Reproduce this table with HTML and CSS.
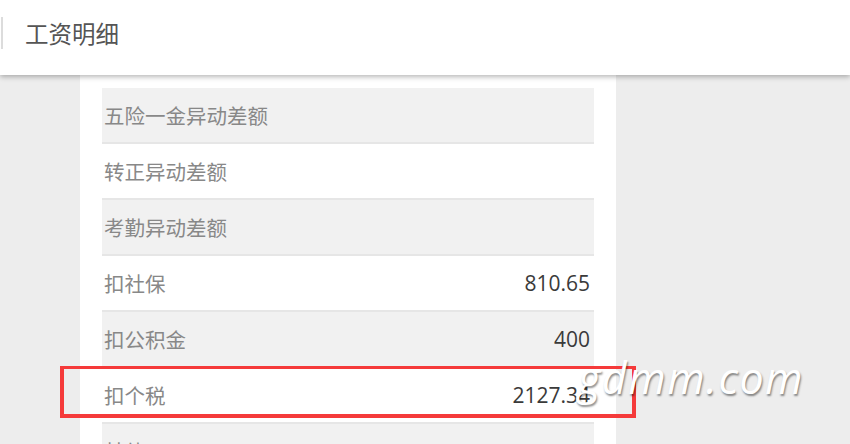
FILE: index.html
```html
<!DOCTYPE html>
<html lang="zh-CN">
<head>
<meta charset="utf-8">
<title>工资明细</title>
<link rel="stylesheet" href="styles.css">
</head>
<body>
<header class="topbar">
  <div class="topbar-title">工资明细</div>
</header>
<main class="page">
  <section class="card">
    <div class="row row-alt"><span class="label">五险一金异动差额</span><span class="value"></span></div>
    <div class="row"><span class="label">转正异动差额</span><span class="value"></span></div>
    <div class="row row-alt"><span class="label">考勤异动差额</span><span class="value"></span></div>
    <div class="row"><span class="label">扣社保</span><span class="value">810.65</span></div>
    <div class="row row-alt"><span class="label">扣公积金</span><span class="value">400</span></div>
    <div class="row"><span class="label">扣个税</span><span class="value">2127.34</span></div>
    <div class="row row-alt"><span class="label">其他</span><span class="value"></span></div>
  </section>
</main>
<div class="highlight"></div>
<div class="watermark">gdmm.com</div>
</body>
</html>
```
FILE: styles.css
```css
html, body {
  margin: 0;
  padding: 0;
}
body {
  background: #ededed;
  width: 850px;
  height: 444px;
  overflow: hidden;
  position: relative;
  font-family: "Noto Sans CJK SC", sans-serif;
}
.topbar {
  position: relative;
  z-index: 2;
  height: 75px;
  background: #ffffff;
  box-shadow: 0 2px 5px rgba(0, 0, 0, 0.28);
  display: flex;
  align-items: center;
}
.topbar::before {
  content: "";
  position: absolute;
  left: 1px;
  top: 17px;
  width: 2px;
  height: 32px;
  background: #dcdcdc;
}
.topbar-title {
  margin-left: 25px;
  margin-top: -8px;
  font-size: 23.5px;
  color: #555555;
  line-height: 1;
}
.page {
  padding-left: 80px;
}
.card {
  width: 492px;
  background: #ffffff;
  padding: 13px 22px 0;
}
.row {
  height: 54px;
  border-bottom: 2px solid #e6e6e6;
  background: #ffffff;
  display: flex;
  align-items: center;
  justify-content: space-between;
  padding: 0 4px 0 2px;
}
.row-alt {
  background: #f1f1f1;
}
.label {
  font-family: "Noto Sans CJK SC", sans-serif;
  font-size: 20.5px;
  color: #888888;
}
.value {
  font-family: "Open Sans", "Noto Sans CJK SC", sans-serif;
  font-size: 21px;
  color: #3a3a3a;
}
.highlight {
  position: absolute;
  left: 60px;
  top: 366px;
  width: 568px;
  height: 45px;
  border: 4px solid #f53a3a;
  border-top-width: 3px;
  z-index: 3;
}
.watermark {
  position: absolute;
  left: 578px;
  top: 348px;
  font-family: "Open Sans", sans-serif;
  font-style: italic;
  font-size: 43px;
  color: #ffffff;
  text-shadow: 1px 2px 2px rgba(0, 0, 0, 0.45);
  letter-spacing: 1.5px;
  z-index: 4;
}
```
